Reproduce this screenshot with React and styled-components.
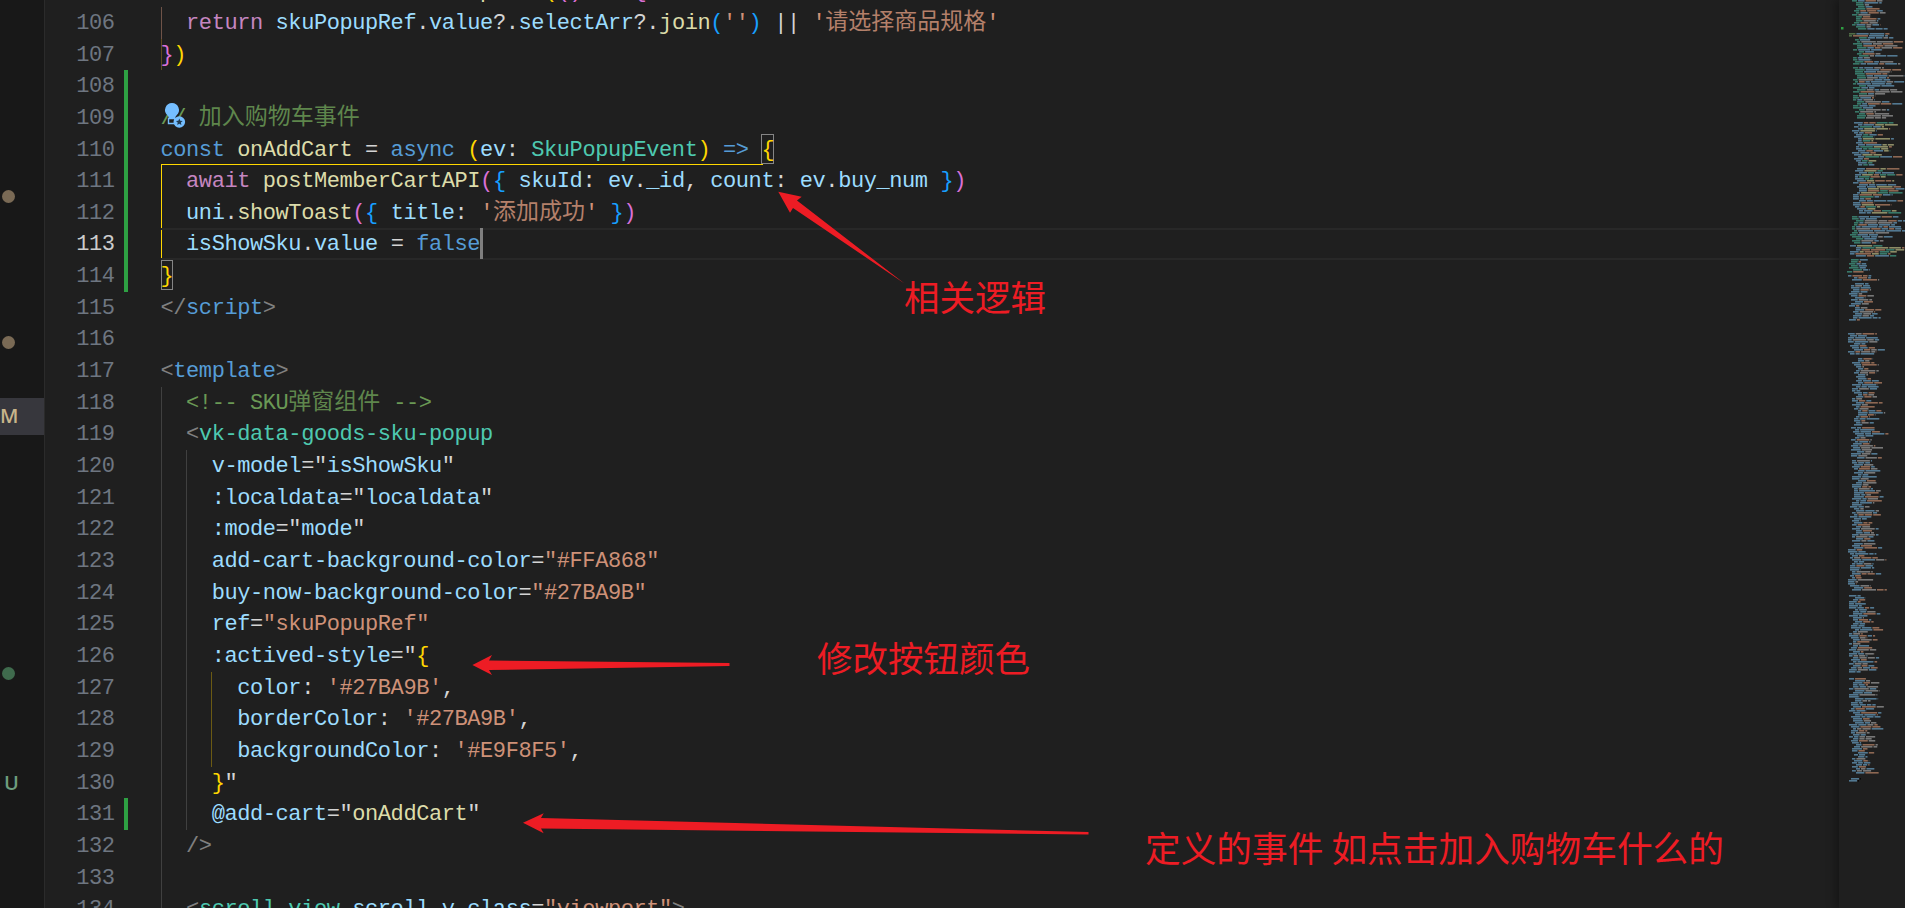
import React from 'react';
import styled, { createGlobalStyle } from 'styled-components';

const Global = createGlobalStyle`
  html, body { margin: 0; padding: 0; background: #1f1f1f; overflow: hidden; }
`;

const COLORS = {
  kw: '#c586c0', v: '#9cdcfe', fn: '#dcdcaa', str: '#ce9178', st: '#569cd6', ty: '#4ec9b0',
  com: '#6a9955', p: '#d4d4d4', tag: '#808080', y: '#ffd700', m: '#da70d6', b: '#179fff',
};

const Window = styled.div`
  position: relative;
  display: flex;
  width: 1905px;
  height: 908px;
  overflow: hidden;
  background: #1f1f1f;
`;

const Sidebar = styled.aside`
  flex: none;
  width: 44px;
  box-sizing: content-box;
  padding-top: 31px;
  background: #181818;
  border-right: 1px solid #2b2b2b;
`;

const TreeRow = styled.div`
  display: flex;
  align-items: center;
  height: 36.7px;
  padding-left: ${p => p.$pad || 0}px;
  background: ${p => (p.$active ? '#37373d' : 'transparent')};
`;

const Dot = styled.span`
  width: 13px;
  height: 13px;
  margin-left: 2px;
  border-radius: 50%;
  background: ${p => p.$color};
`;

const Badge = styled.span`
  font: 600 20px/1 'Open Sans', sans-serif;
  color: ${p => p.$color};
`;

const Editor = styled.main`
  flex: 1;
  min-width: 0;
  overflow: hidden;
`;

const Lines = styled.div`
  margin-top: -24.77px;
  font-family: 'Liberation Mono', monospace;
  font-size: 22px;
  letter-spacing: -0.42px;
  line-height: 33.2px;
`;

const Line = styled.div`
  display: flex;
  height: 31.67px;
`;

const LineNo = styled.span`
  flex: none;
  width: 69.5px;
  text-align: right;
  color: ${p => (p.$current ? '#cccccc' : '#6e7681')};
`;

const Change = styled.span`
  flex: none;
  width: 4.5px;
  margin-left: 9px;
  background: ${p => (p.$on ? '#2ea043' : 'transparent')};
`;

const Code = styled.code`
  flex: 1;
  box-sizing: border-box;
  margin-left: 32.5px;
  font: inherit;
  white-space: pre;
  background-repeat: no-repeat;
  background-origin: border-box;
  background-image: ${p => p.$guides.map(g => `linear-gradient(${g.c}, ${g.c})`).join(', ') || 'none'};
  background-position: ${p => p.$guides.map(g => `${g.x}px ${g.bottom ? '100%' : '0'}`).join(', ') || '0 0'};
  background-size: ${p => p.$guides.map(g => `${g.w}px ${g.h || '100%'}`).join(', ') || 'auto'};
  border-top: ${p => (p.$current ? '2px solid #282828' : 'none')};
  border-bottom: ${p => (p.$current ? '2px solid #282828' : 'none')};
  line-height: ${p => (p.$current ? '29.2px' : 'inherit')};
`;

const Tok = styled.span`
  color: ${p => COLORS[p.$k]};
`;

const Boxed = styled.span`
  display: inline-block;
  height: 30px;
  vertical-align: top;
  color: ${COLORS.y};
  box-shadow: inset 0 0 0 1px #858585;
`;

const Han = styled.span`
  font-family: 'Noto Sans CJK SC', sans-serif;
  font-size: 23px;
  font-weight: 400;
  letter-spacing: 0;
  line-height: 0;
  opacity: 0.85;
`;

const Caret = styled.span`
  display: inline-block;
  width: 2.5px;
  height: 31px;
  margin-top: -2px;
  vertical-align: top;
  background: #7f7f7f;
`;

const Minimap = styled.svg`
  flex: none;
  display: block;
  width: 66px;
  height: 908px;
  background: #1f1f1f;
  box-shadow: -3px 0 9px rgba(0, 0, 0, 0.35);
  position: relative;
`;

const Bulb = styled.svg`
  position: absolute;
  left: 158px;
  top: 100px;
  width: 30px;
  height: 30px;
`;

const Arrows = styled.svg`
  position: absolute;
  left: 0;
  top: 0;
  width: 1905px;
  height: 908px;
  pointer-events: none;
`;

const Note = styled.div`
  position: absolute;
  left: ${p => p.$x}px;
  top: ${p => p.$y}px;
  font-family: 'Noto Sans CJK SC', sans-serif;
  font-size: ${p => p.$size || 35.5}px;
  line-height: 44px;
  color: #ed1c24;
  white-space: pre;
`;

const CJK = /([\u4e00-\u9fff]+)/;

function Text({ k, s }) {
  if (k === 'box') return <Boxed>{s}</Boxed>;
  return (
    <Tok $k={k}>
      {s.split(CJK).map((part, i) => (i % 2 ? <Han key={i}>{part}</Han> : part))}
    </Tok>
  );
}

const LINES = [
  [105, [['st', 'const '], ['v', 'selectArrText'], ['p', ' = '], ['fn', 'computed'], ['y', '('], ['m', '('], ['m', ')'], ['st', ' => '], ['m', '{']]],
  [106, [['p', '  '], ['kw', 'return '], ['v', 'skuPopupRef'], ['p', '.'], ['v', 'value'], ['p', '?.'], ['v', 'selectArr'], ['p', '?.'], ['fn', 'join'], ['b', '('], ['str', "''"], ['b', ')'], ['p', ' || '], ['str', "'请选择商品规格'"]]],
  [107, [['m', '}'], ['y', ')']]],
  [108, []],
  [109, [['com', '// 加入购物车事件']]],
  [110, [['st', 'const '], ['fn', 'onAddCart'], ['p', ' = '], ['st', 'async '], ['y', '('], ['v', 'ev'], ['p', ': '], ['ty', 'SkuPopupEvent'], ['y', ')'], ['st', ' => '], ['box', '{']]],
  [111, [['p', '  '], ['kw', 'await '], ['fn', 'postMemberCartAPI'], ['m', '('], ['b', '{'], ['v', ' skuId'], ['p', ': '], ['v', 'ev'], ['p', '.'], ['v', '_id'], ['p', ', '], ['v', 'count'], ['p', ': '], ['v', 'ev'], ['p', '.'], ['v', 'buy_num '], ['b', '}'], ['m', ')']]],
  [112, [['p', '  '], ['v', 'uni'], ['p', '.'], ['fn', 'showToast'], ['m', '('], ['b', '{'], ['v', ' title'], ['p', ': '], ['str', "'添加成功'"], ['p', ' '], ['b', '}'], ['m', ')']]],
  [113, [['p', '  '], ['v', 'isShowSku'], ['p', '.'], ['v', 'value'], ['p', ' = '], ['st', 'false']], 'caret'],
  [114, [['box', '}']]],
  [115, [['tag', '</'], ['st', 'script'], ['tag', '>']]],
  [116, []],
  [117, [['tag', '<'], ['st', 'template'], ['tag', '>']]],
  [118, [['p', '  '], ['com', '<!-- SKU弹窗组件 -->']]],
  [119, [['p', '  '], ['tag', '<'], ['ty', 'vk-data-goods-sku-popup']]],
  [120, [['p', '    '], ['v', 'v-model'], ['p', '="'], ['v', 'isShowSku'], ['p', '"']]],
  [121, [['p', '    '], ['v', ':localdata'], ['p', '="'], ['v', 'localdata'], ['p', '"']]],
  [122, [['p', '    '], ['v', ':mode'], ['p', '="'], ['v', 'mode'], ['p', '"']]],
  [123, [['p', '    '], ['v', 'add-cart-background-color'], ['p', '='], ['str', '"#FFA868"']]],
  [124, [['p', '    '], ['v', 'buy-now-background-color'], ['p', '='], ['str', '"#27BA9B"']]],
  [125, [['p', '    '], ['v', 'ref'], ['p', '='], ['str', '"skuPopupRef"']]],
  [126, [['p', '    '], ['v', ':actived-style'], ['p', '="'], ['y', '{']]],
  [127, [['p', '      '], ['v', 'color'], ['p', ': '], ['str', "'#27BA9B'"], ['p', ',']]],
  [128, [['p', '      '], ['v', 'borderColor'], ['p', ': '], ['str', "'#27BA9B'"], ['p', ',']]],
  [129, [['p', '      '], ['v', 'backgroundColor'], ['p', ': '], ['str', "'#E9F8F5'"], ['p', ',']]],
  [130, [['p', '    '], ['y', '}'], ['p', '"']]],
  [131, [['p', '    '], ['v', '@add-cart'], ['p', '="'], ['fn', 'onAddCart'], ['p', '"']]],
  [132, [['p', '  '], ['tag', '/>']]],
  [133, []],
  [134, [['p', '  '], ['tag', '<'], ['ty', 'scroll-view '], ['v', 'scroll-y class'], ['p', '='], ['str', '"viewport"'], ['tag', '>']]],
];

const CHANGED = new Set([108, 109, 110, 111, 112, 113, 114, 131]);

/* Indent guides and the active bracket-pair guide of a line, as backgrounds of its code cell. */
function guidesFor(n) {
  const g = [];
  if (n === 106) g.push({ x: 0, w: 1, c: '#6f5348' });
  if (n === 107) g.push({ x: 0, w: 1, c: '#5e4a1e' });
  if (n === 110) g.push({ x: 0, w: 602, h: '1.5px', bottom: true, c: '#ffd700' });
  if (n >= 111 && n <= 113) g.push({ x: 0, w: 1.5, c: '#ffd700' });
  if (n >= 118) g.push({ x: 0, w: 1, c: '#404040' });
  if (n >= 120 && n <= 131) g.push({ x: 25, w: 1, c: '#404040' });
  if (n >= 127 && n <= 129) g.push({ x: 50, w: 1, c: '#6b5a13' });
  return g;
}

const TREE = [
  {}, {}, {}, {},
  { dot: '#7a6a55' },
  {}, {}, {},
  { dot: '#7a6a55' },
  {},
  { badge: 'M', color: '#c8b48a', active: true },
  {}, {}, {}, {}, {}, {},
  { dot: '#3f6b4d' },
  {}, {},
  { badge: 'U', color: '#6d9c7d', pad: 4 },
];

/* Minimap: each block is [firstY, lastY, x, minW, maxW, palette] */
const T = '#3f8f7c', B = '#5f8fae', O = '#a9795f', G = '#5d8050', W = '#8d8d8d', Y = '#a8a878';
const P_TPL = [T, B, O, B, W];
const P_TPL2 = [B, O, B, Y, T];
const P_CSS = [B, O, W, B];
const BLOCKS = [
  [0, 28, 1852, 12, 32, P_TPL],
  [33, 35, 1849, 36, 42, [G, B, O]],
  [37, 64, 1853, 14, 50, P_TPL],
  [67, 85, 1853, 16, 52, P_TPL],
  [87, 118, 1853, 20, 52, P_TPL],
  [122, 165, 1852, 14, 46, P_TPL2],
  [168, 212, 1853, 14, 48, P_TPL2],
  [216, 243, 1850, 18, 55, P_TPL],
  [245, 256, 1850, 30, 55, P_TPL2],
  [259, 272, 1847, 10, 20, [T, O, B]],
  [275, 279, 1848, 14, 28, P_CSS],
  [283, 320, 1849, 8, 30, P_CSS],
  [333, 353, 1848, 8, 32, P_CSS],
  [358, 400, 1852, 8, 26, P_CSS],
  [402, 425, 1852, 8, 28, P_CSS],
  [427, 458, 1851, 8, 34, P_CSS],
  [460, 486, 1852, 8, 26, P_CSS],
  [488, 540, 1850, 8, 30, P_CSS],
  [543, 590, 1848, 8, 36, P_CSS],
  [595, 672, 1849, 10, 30, P_CSS],
  [678, 740, 1849, 8, 32, P_CSS],
  [742, 773, 1852, 8, 26, P_CSS],
  [778, 780, 1847, 10, 10, [B]],
];

function miniRects() {
  let seed = 7;
  const rnd = () => {
    seed = (seed * 16807) % 2147483647;
    return seed / 2147483647;
  };
  const out = [];
  BLOCKS.forEach(([y0, y1, x, minW, maxW, pal]) => {
    for (let y = y0; y <= y1; y += 2) {
      let cx = x + Math.floor(rnd() * 4) * 2;
      const total = minW + rnd() * (maxW - minW);
      const end = Math.min(cx + total, 1905);
      let first = true;
      while (cx < end) {
        const w = Math.min(first ? 3 + rnd() * 7 : 4 + rnd() * 12, end - cx);
        const fill = first ? pal[0] : pal[1 + Math.floor(rnd() * (pal.length - 1))];
        out.push(<rect key={out.length} x={cx - 1839} y={y} width={w} height={1.6} fill={fill} opacity={0.8} />);
        cx += w + 1;
        first = false;
      }
    }
  });
  return out;
}

export default function App() {
  return (
    <Window>
      <Global />
      <Sidebar>
        {TREE.map((r, i) => (
          <TreeRow key={i} $active={r.active} $pad={r.pad}>
            {r.dot && <Dot $color={r.dot} />}
            {r.badge && <Badge $color={r.color}>{r.badge}</Badge>}
          </TreeRow>
        ))}
      </Sidebar>

      <Editor>
        <Lines>
          {LINES.map(([n, toks, extra]) => (
            <Line key={n}>
              <LineNo $current={n === 113}>{n}</LineNo>
              <Change $on={CHANGED.has(n)} />
              <Code $current={n === 113} $guides={guidesFor(n)}>
                {toks.map(([k, s], i) => <Text key={i} k={k} s={s} />)}
                {extra === 'caret' && <Caret />}
              </Code>
            </Line>
          ))}
        </Lines>
      </Editor>

      <Minimap viewBox="0 0 66 908">
        {miniRects()}
        <rect x={2} y={27} width={2.5} height={2.5} fill="#2ea043" />
      </Minimap>

      <Bulb viewBox="0 0 30 30">
        <path d="M14 3a7 7 0 0 1 4.6 12.2c-.9.9-1.4 2-1.6 3.3h-6c-.2-1.3-.7-2.4-1.6-3.3A7 7 0 0 1 14 3z" fill="#75beff" />
        <path d="M10.5 18.5h6.5v5h-6.5z" fill="#1f1f1f" stroke="#75beff" strokeWidth="1.4" />
        <circle cx="21.3" cy="22" r="5.8" fill="#75beff" />
        <path d="M21.3 18.6l1 2.2 2.4.2-1.8 1.6.5 2.4-2.1-1.2-2.1 1.2.5-2.4-1.8-1.6 2.4-.2z" fill="#1f3a52" />
      </Bulb>

      <Arrows viewBox="0 0 1905 908">
        <polygon fill="#ed1c24" points="778.3,191.7 801.7,196.7 797,200.5 904.5,283.5 793,208 790,212.7" />
        <polygon fill="#ed1c24" points="472.4,665 492,655 489,660.5 729.5,663 729.5,666 489,670 492,675" />
        <polygon fill="#ed1c24" points="523,822.7 543.7,813.3 541,818 1088.5,832 1088.5,834.5 541,828.5 543.7,833.3" />
      </Arrows>

      <Note $x={904} $y={274}>相关逻辑</Note>
      <Note $x={817} $y={635}>修改按钮颜色</Note>
      <Note $x={1145} $y={825} $size={35.7}>定义的事件 如点击加入购物车什么的</Note>
    </Window>
  );
}
